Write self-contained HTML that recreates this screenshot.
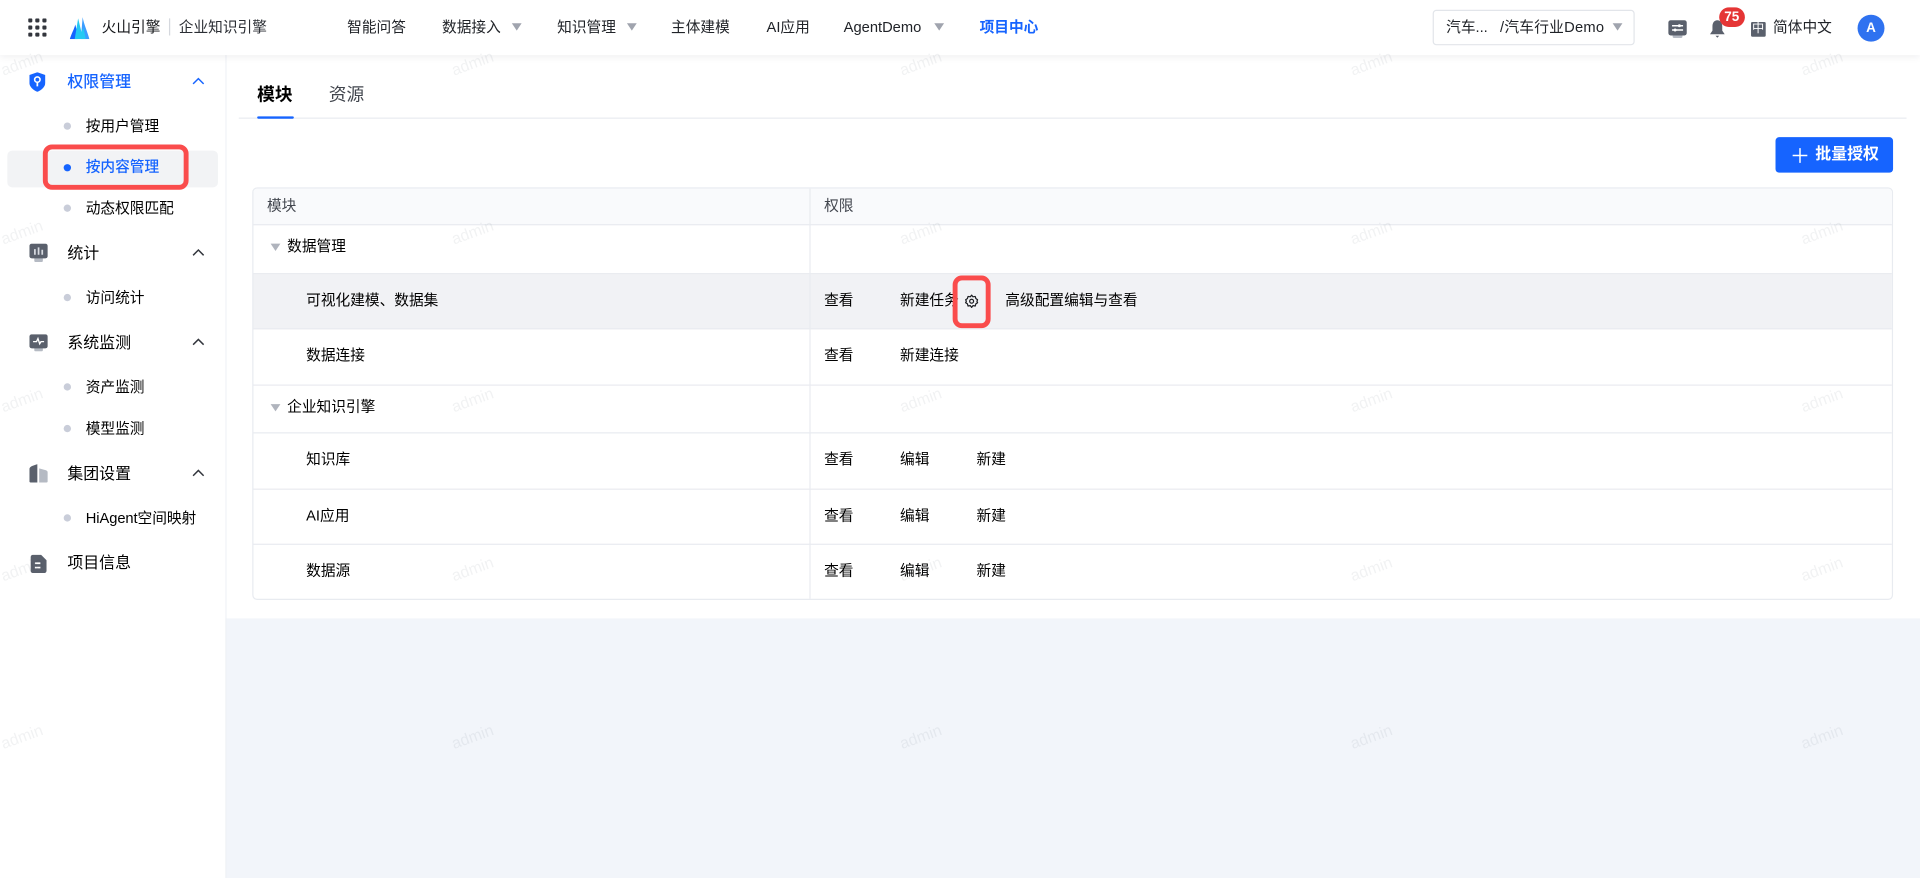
<!DOCTYPE html>
<html lang="zh-CN"><head><meta charset="utf-8"><title>按内容管理</title>
<style>
html,body{margin:0;padding:0;width:1920px;height:878px;overflow:hidden;background:#f2f5fa}
#s{position:absolute;left:0;top:0;width:1568px;height:717px;transform:scale(1.22449);transform-origin:0 0;font-family:"Liberation Sans","Noto Sans CJK SC",sans-serif;font-size:12px;color:#000;overflow:hidden;filter:blur(.3px)}
#s div,#s span,#s svg{position:absolute}
.t{line-height:20px;white-space:nowrap;margin-top:.4px}
.m{font-size:13px}
.b{color:#1664ff}
.n{color:#202328;top:12px}
.d{width:6px;height:6px;border-radius:50%;background:#c9cdd9;left:52px}
.l{background:#e9ebf0;height:1px;left:0;width:1339px}
.tri{width:0;height:0;border-left:4.2px solid transparent;border-right:4.2px solid transparent;border-top:6px solid #a0a4ae}
.w{font-size:13px;color:rgba(20,30,50,.06);transform:rotate(-20deg);width:40px;text-align:center;line-height:16px;z-index:20}
.red{border:4.5px solid #fa4c4c;border-radius:7.5px;box-sizing:border-box;z-index:10}
</style></head><body><div id="s">

<div style="left:0;top:0;width:1568px;height:505px;background:#fff"></div>
<div style="left:184px;top:0;width:1px;height:717px;background:#eff1f5"></div>
<div style="left:0;top:45px;width:184px;height:672px;background:#fff"></div>

<!-- header -->
<div style="left:0;top:0;width:1568px;height:45px;background:#fff;box-shadow:0 1px 6px rgba(20,30,50,.08);z-index:5">
<svg style="left:23px;top:15px" width="15" height="15" viewBox="0 0 15 15" fill="#33363d"><rect x="0" y="0" width="3.4" height="3.4" rx="1"/><rect x="5.8" y="0" width="3.4" height="3.4" rx="1"/><rect x="11.6" y="0" width="3.4" height="3.4" rx="1"/><rect x="0" y="5.8" width="3.4" height="3.4" rx="1"/><rect x="5.8" y="5.8" width="3.4" height="3.4" rx="1"/><rect x="11.6" y="5.8" width="3.4" height="3.4" rx="1"/><rect x="0" y="11.6" width="3.4" height="3.4" rx="1"/><rect x="5.8" y="11.6" width="3.4" height="3.4" rx="1"/><rect x="11.6" y="11.6" width="3.4" height="3.4" rx="1"/></svg>
<svg style="left:57px;top:14px" width="16" height="18" viewBox="0 0 16 18"><path d="M0 18C1.5 13 3.5 10 4.5 6C5.2 9 6 11 6.5 18Z" fill="#1664ff"/><path d="M9 18C9.5 12 10 6 10.5 0C11.5 6 14.5 12 16 18Z" fill="#3b9dff"/><path d="M4 18C5 12 6 6 6.8 1C8 6 8.8 9 9.5 12C10 10.5 10.5 10 11 9C12 12 12.5 15 13 18Z" fill="#25c9f2"/></svg>
<span class="t" style="left:83px;top:12px;color:#141619">火山引擎</span>
<div style="left:138px;top:15px;width:1px;height:14px;background:#d5d8de"></div>
<span class="t" style="left:146px;top:12px;color:#2b2e34">企业知识引擎</span>

<span class="t n" style="left:283.5px">智能问答</span>
<span class="t n" style="left:361px">数据接入</span><div class="tri" style="left:417.5px;top:19px"></div>
<span class="t n" style="left:455px">知识管理</span><div class="tri" style="left:511.5px;top:19px"></div>
<span class="t n" style="left:548px">主体建模</span>
<span class="t n" style="left:626px">AI应用</span>
<span class="t n" style="left:689px">AgentDemo</span><div class="tri" style="left:763px;top:19px"></div>
<span class="t b" style="left:800px;top:12px;font-weight:700">项目中心</span>

<div style="left:1170px;top:8px;width:165px;height:29px;box-sizing:border-box;border:1px solid #e2e5ea;border-radius:3px;background:#fff"></div>
<span class="t" style="left:1181px;top:11.5px;color:#202328">汽车...</span>
<span class="t" style="left:1225px;top:11.5px;color:#202328;letter-spacing:.2px">/汽车行业Demo</span>
<div class="tri" style="left:1317px;top:19px"></div>

<svg style="left:1362px;top:16px" width="16" height="15" viewBox="0 0 16 15"><rect x="4" y="11" width="8" height="4" rx="1" fill="#b5bac3"/><rect x="0.5" y="0.5" width="15" height="12.5" rx="2" fill="#5a606c"/><path d="M3.5 5H12.5M3.5 8.5H12.5" stroke="#fff" stroke-width="1.2"/><circle cx="9.5" cy="5" r="1.2" fill="#fff"/><circle cx="6" cy="8.5" r="1.2" fill="#fff"/></svg>
<svg style="left:1396px;top:16px" width="13" height="15" viewBox="0 0 13 15"><path d="M6.5 0.5C9 0.5 10.5 2.5 10.5 5.5V9L12.5 12H0.5L2.5 9V5.5C2.5 2.5 4 0.5 6.5 0.5Z" fill="#5a606c"/><path d="M5 13.2H8L6.5 14.8Z" fill="#5a606c"/></svg>
<div style="left:1403.5px;top:5.5px;width:21.5px;height:16.5px;border-radius:8.5px;background:#e53535;color:#fff;font-size:11px;font-weight:700;line-height:16.5px;text-align:center">75</div>
<div style="left:1429.5px;top:18px;width:12.5px;height:12px;border-radius:1px;background:#5a606c;color:#fff;font-size:10px;font-weight:400;line-height:12px;text-align:center;overflow:hidden">中</div>
<span class="t" style="left:1448px;top:12px;color:#202328">简体中文</span>
<div style="left:1517px;top:12px;width:22px;height:22px;border-radius:50%;background:#2f72f0;color:#fff;font-size:11px;font-weight:700;line-height:22px;text-align:center">A</div>
</div>

<!-- sidebar -->
<div style="left:6px;top:122.5px;width:172px;height:30px;background:#f2f3f5;border-radius:4px"></div>

<svg style="left:24px;top:59px" width="13" height="16" viewBox="0 0 13 16"><path d="M6.5 0L13 2.2V8.5C13 12 10 14.5 6.5 16C3 14.5 0 12 0 8.5V2.2Z" fill="#1664ff"/><circle cx="6.5" cy="6" r="2.2" fill="none" stroke="#fff" stroke-width="1.3"/><path d="M6.5 8V11.5" stroke="#fff" stroke-width="1.4"/></svg>
<span class="t m b" style="left:55px;top:57px;font-weight:500">权限管理</span>
<svg style="left:156.5px;top:62.5px" width="10" height="7" viewBox="0 0 10 7"><path d="M0.7 5.5L5 1.2L9.3 5.5" fill="none" stroke="#1664ff" stroke-width="1.2"/></svg>

<div class="d" style="top:100px"></div><span class="t" style="left:70px;top:93px">按用户管理</span>
<div class="d" style="top:134px;background:#1664ff"></div><span class="t b" style="left:70px;top:126px;font-weight:500">按内容管理</span>
<div class="d" style="top:167px"></div><span class="t" style="left:70px;top:159.2px">动态权限匹配</span>

<svg style="left:24px;top:199px" width="15" height="15" viewBox="0 0 15 15"><rect x="4" y="10" width="7" height="5" rx="1" fill="#b5bac3"/><rect x="0" y="0" width="15" height="12" rx="2" fill="#5a606c"/><path d="M4.5 4.5V9M7.5 3V9M10.5 5V9" stroke="#d8dbe1" stroke-width="1.4"/></svg>
<span class="t m" style="left:55px;top:197px">统计</span>
<svg style="left:156.5px;top:202.5px" width="10" height="7" viewBox="0 0 10 7"><path d="M0.7 5.5L5 1.2L9.3 5.5" fill="none" stroke="#33363d" stroke-width="1.2"/></svg>
<div class="d" style="top:240px"></div><span class="t" style="left:70px;top:233px">访问统计</span>

<svg style="left:24px;top:273px" width="15" height="14" viewBox="0 0 15 14"><rect x="4" y="9" width="7" height="5" rx="1" fill="#b5bac3"/><rect x="0" y="0" width="15" height="11.5" rx="2" fill="#5a606c"/><path d="M3 6H5.8L7 3.5L8.4 7.8L9.5 6H12" fill="none" stroke="#fff" stroke-width="1.1"/></svg>
<span class="t m" style="left:55px;top:270px">系统监测</span>
<svg style="left:156.5px;top:275.5px" width="10" height="7" viewBox="0 0 10 7"><path d="M0.7 5.5L5 1.2L9.3 5.5" fill="none" stroke="#33363d" stroke-width="1.2"/></svg>
<div class="d" style="top:313px"></div><span class="t" style="left:70px;top:306px">资产监测</span>
<div class="d" style="top:347px"></div><span class="t" style="left:70px;top:340px">模型监测</span>

<svg style="left:24px;top:379px" width="15" height="15" viewBox="0 0 15 15"><path d="M0 4.5C0 3 1 2 2.5 1.5L6.5 0V15H1C.4 15 0 14.6 0 14Z" fill="#5a606c"/><path d="M8 3.5L13.5 5C14.4 5.3 15 6 15 7V14C15 14.6 14.6 15 14 15H8Z" fill="#b5bac3"/></svg>
<span class="t m" style="left:55px;top:377px">集团设置</span>
<svg style="left:156.5px;top:382.5px" width="10" height="7" viewBox="0 0 10 7"><path d="M0.7 5.5L5 1.2L9.3 5.5" fill="none" stroke="#33363d" stroke-width="1.2"/></svg>
<div class="d" style="top:420px"></div><span class="t" style="left:70px;top:413px;letter-spacing:-.05px">HiAgent空间映射</span>

<svg style="left:25px;top:453px" width="14" height="15" viewBox="0 0 14 15"><path d="M2 0H8.5L13 4.5V13C13 14.2 12.2 15 11 15H2C.9 15 0 14.2 0 13V2C0 .9 .9 0 2 0Z" fill="#5a606c"/><path d="M3.5 7H8M3.5 10.5H8" stroke="#fff" stroke-width="1.4"/></svg>
<span class="t m" style="left:55px;top:450px">项目信息</span>

<div class="red" style="left:34.5px;top:118px;width:119.5px;height:36.5px"></div>

<!-- tabs -->
<span class="t" style="left:210px;top:66.4px;font-size:14.5px;font-weight:700;line-height:22px">模块</span>
<span class="t" style="left:268.5px;top:66.4px;font-size:14.5px;line-height:22px;color:#42464e">资源</span>
<div style="left:195px;top:96px;width:1362px;height:1px;background:#e9ebf0"></div>
<div style="left:210px;top:95px;width:29.5px;height:2px;background:#1664ff;border-radius:1px"></div>

<!-- button -->
<div style="left:1450px;top:112px;width:96px;height:29px;background:#1664ff;border-radius:3px"></div>
<svg style="left:1463px;top:119.5px" width="14" height="14" viewBox="0 0 14 14"><path d="M7 1V13M1 7H13" stroke="#fff" stroke-width="1.2"/></svg>
<span class="t" style="left:1482.5px;top:116px;color:#fff;font-size:13px;font-weight:700">批量授权</span>

<!-- table -->
<div style="left:206px;top:153px;width:1340px;height:337px;box-sizing:border-box;border:1px solid #e8ebf0;border-radius:4px;overflow:hidden">
<div style="left:0;top:0;width:1340px;height:30px;background:#f9fafc"></div>
<div style="left:0;top:70px;width:1340px;height:45px;background:#f1f2f5"></div>
<div class="l" style="top:29px"></div>
<div class="l" style="top:69px"></div>
<div class="l" style="top:114px"></div>
<div class="l" style="top:160px"></div>
<div class="l" style="top:199px"></div>
<div class="l" style="top:245px"></div>
<div class="l" style="top:290px"></div>
<div style="left:454px;top:0;width:1px;height:337px;background:#e9ebf0"></div>
</div>

<span class="t" style="left:218px;top:158px;color:#42464e">模块</span>
<span class="t" style="left:673px;top:158px;color:#42464e">权限</span>

<div class="tri" style="left:220.5px;top:198.5px;border-top-color:#b0b4bd"></div>
<span class="t" style="left:234.5px;top:191px">数据管理</span>

<span class="t" style="left:250px;top:235px">可视化建模、数据集</span>
<span class="t" style="left:673px;top:235px">查看</span>
<span class="t" style="left:735px;top:235px">新建任务</span>
<svg style="left:787.5px;top:240px" width="11" height="12" viewBox="0 0 11 12"><path d="M5.5 1L6.6 2.4L8.4 2.1L9 3.9L10.4 4.8L9.8 6L10.4 7.2L9 8.1L8.4 9.9L6.6 9.6L5.5 11L4.4 9.6L2.6 9.9L2 8.1L.6 7.2L1.2 6L.6 4.8L2 3.9L2.6 2.1L4.4 2.4Z" fill="none" stroke="#1b1d21" stroke-width="1" stroke-linejoin="round"/><circle cx="5.5" cy="6" r="1.6" fill="none" stroke="#1b1d21" stroke-width="1"/></svg>
<span class="t" style="left:821px;top:235px">高级配置编辑与查看</span>
<div class="red" style="left:777.5px;top:224.5px;width:31px;height:43.5px"></div>

<span class="t" style="left:250px;top:280px">数据连接</span>
<span class="t" style="left:673px;top:280px">查看</span>
<span class="t" style="left:735px;top:280px">新建连接</span>

<div class="tri" style="left:220.5px;top:329.5px;border-top-color:#b0b4bd"></div>
<span class="t" style="left:234.5px;top:322px">企业知识引擎</span>

<span class="t" style="left:250px;top:365px">知识库</span>
<span class="t" style="left:673px;top:365px">查看</span>
<span class="t" style="left:735px;top:365px">编辑</span>
<span class="t" style="left:797.5px;top:365px">新建</span>

<span class="t" style="left:250px;top:411px">AI应用</span>
<span class="t" style="left:673px;top:411px">查看</span>
<span class="t" style="left:735px;top:411px">编辑</span>
<span class="t" style="left:797.5px;top:411px">新建</span>

<span class="t" style="left:250px;top:456px">数据源</span>
<span class="t" style="left:673px;top:456px">查看</span>
<span class="t" style="left:735px;top:456px">编辑</span>
<span class="t" style="left:797.5px;top:456px">新建</span>

<!-- watermark -->
<span class="w" style="left:-2px;top:44px">admin</span><span class="w" style="left:366px;top:44px">admin</span><span class="w" style="left:732px;top:44px">admin</span><span class="w" style="left:1100px;top:44px">admin</span><span class="w" style="left:1468px;top:44px">admin</span>
<span class="w" style="left:-2px;top:182px">admin</span><span class="w" style="left:366px;top:182px">admin</span><span class="w" style="left:732px;top:182px">admin</span><span class="w" style="left:1100px;top:182px">admin</span><span class="w" style="left:1468px;top:182px">admin</span>
<span class="w" style="left:-2px;top:319px">admin</span><span class="w" style="left:366px;top:319px">admin</span><span class="w" style="left:732px;top:319px">admin</span><span class="w" style="left:1100px;top:319px">admin</span><span class="w" style="left:1468px;top:319px">admin</span>
<span class="w" style="left:-2px;top:457px">admin</span><span class="w" style="left:366px;top:457px">admin</span><span class="w" style="left:732px;top:457px">admin</span><span class="w" style="left:1100px;top:457px">admin</span><span class="w" style="left:1468px;top:457px">admin</span>
<span class="w" style="left:-2px;top:594px">admin</span><span class="w" style="left:366px;top:594px">admin</span><span class="w" style="left:732px;top:594px">admin</span><span class="w" style="left:1100px;top:594px">admin</span><span class="w" style="left:1468px;top:594px">admin</span>
</div></body></html>
